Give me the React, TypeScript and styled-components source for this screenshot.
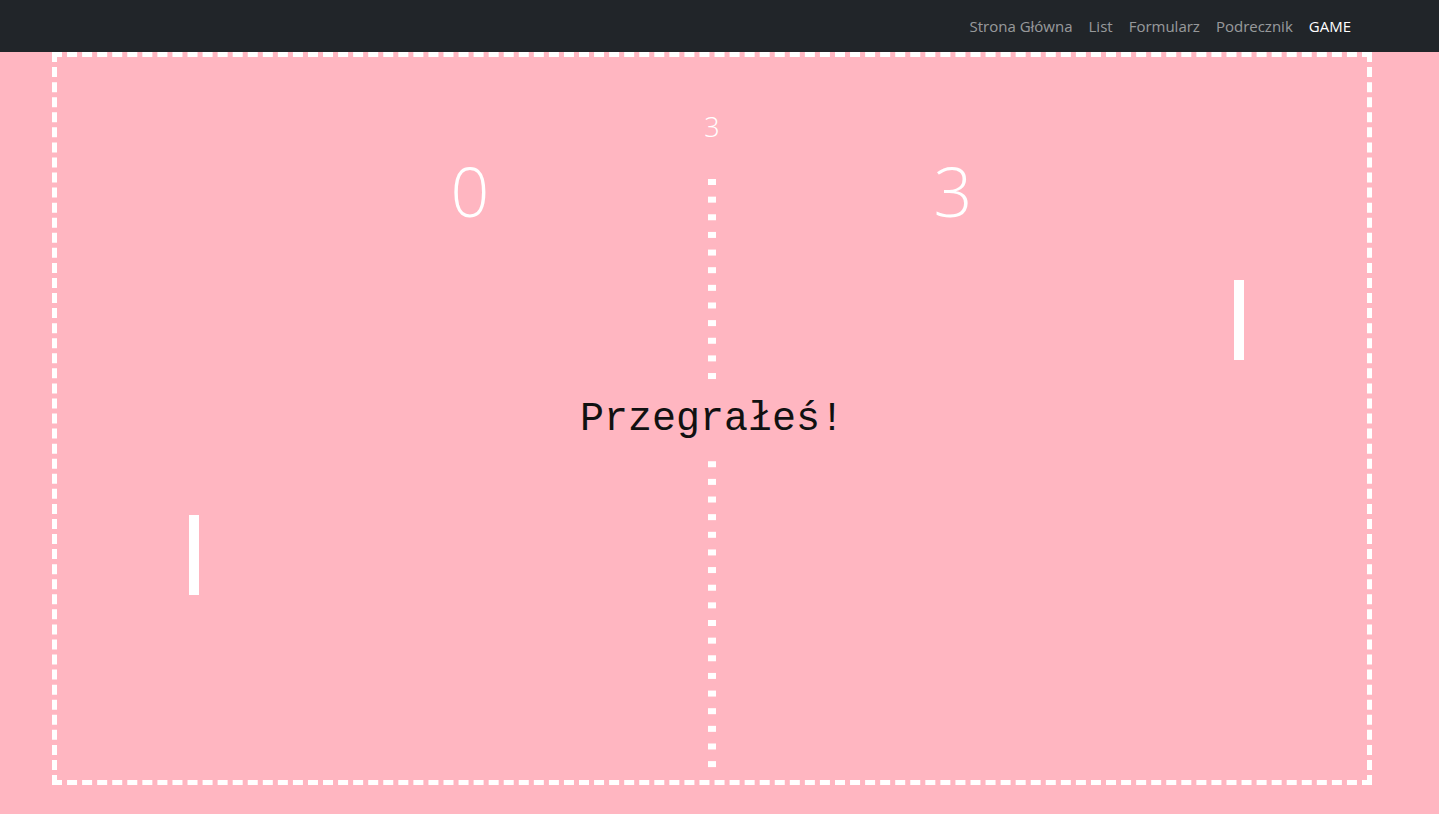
import React from "react";
import styled, { createGlobalStyle } from "styled-components";

const GlobalStyle = createGlobalStyle`
  html, body {
    margin: 0;
    padding: 0;
    background: #ffb6c1;
    font-family: "Open Sans", "Noto Sans", sans-serif;
  }
  * { box-sizing: border-box; }
`;

const Navbar = styled.nav`
  height: 52px;
  background: #212529;
  display: flex;
  align-items: center;
  justify-content: flex-end;
  padding-right: 80px;
`;

const NavList = styled.ul`
  display: flex;
  list-style: none;
  margin: 0;
  padding: 0;
`;

const NavLink = styled.a<{ $active?: boolean }>`
  display: block;
  padding: 8px 8px;
  font-size: 15px;
  line-height: 24px;
  text-decoration: none;
  color: ${(p) => (p.$active ? "#ffffff" : "rgba(255,255,255,0.55)")};
  cursor: pointer;
`;

const Main = styled.main`
  padding-left: 52px;
`;

const Field = styled.div`
  width: 1320px;
  height: 733px;
  border: 5px dashed #ffffff;
  background: #ffb6c1;
`;

const Board = styled.svg`
  display: block;
  width: 1310px;
  height: 723px;
`;

const ScoreText = styled.text<{ $size: number }>`
  font-family: "Open Sans", "Noto Sans", sans-serif;
  font-weight: 300;
  font-size: ${(p) => p.$size}px;
  fill: #ffffff;
`;

const Message = styled.text`
  font-family: "Liberation Mono", "Courier New", monospace;
  font-size: 40px;
  fill: #111111;
`;

const links = ["Strona Główna", "List", "Formularz", "Podrecznik", "GAME"];

export default function App() {
  const dashes: number[] = [];
  for (let k = 0; k <= 33; k++) {
    if (k >= 12 && k <= 15) continue;
    dashes.push(122 + k * 17.64);
  }
  return (
    <>
      <GlobalStyle />
      <Navbar>
        <NavList>
          {links.map((l) => (
            <li key={l}>
              <NavLink $active={l === "GAME"}>{l}</NavLink>
            </li>
          ))}
        </NavList>
      </Navbar>
      <Main>
        <Field>
          <Board viewBox="0 0 1310 723">
            {dashes.map((y) => (
              <rect key={y} x={651} y={y} width={8} height={6} fill="#fff" />
            ))}
            <rect x={132} y={458} width={10} height={80} fill="#fff" />
            <rect x={1177} y={223} width={10} height={80} fill="#fff" />
            <ScoreText $size={27} x={655} y={80} textAnchor="middle">3</ScoreText>
            <ScoreText $size={68} x={413} y={160} textAnchor="middle">0</ScoreText>
            <ScoreText $size={68} x={896} y={160} textAnchor="middle">3</ScoreText>
            <Message x={655} y={373} textAnchor="middle">Przegrałeś!</Message>
          </Board>
        </Field>
      </Main>
    </>
  );
}
